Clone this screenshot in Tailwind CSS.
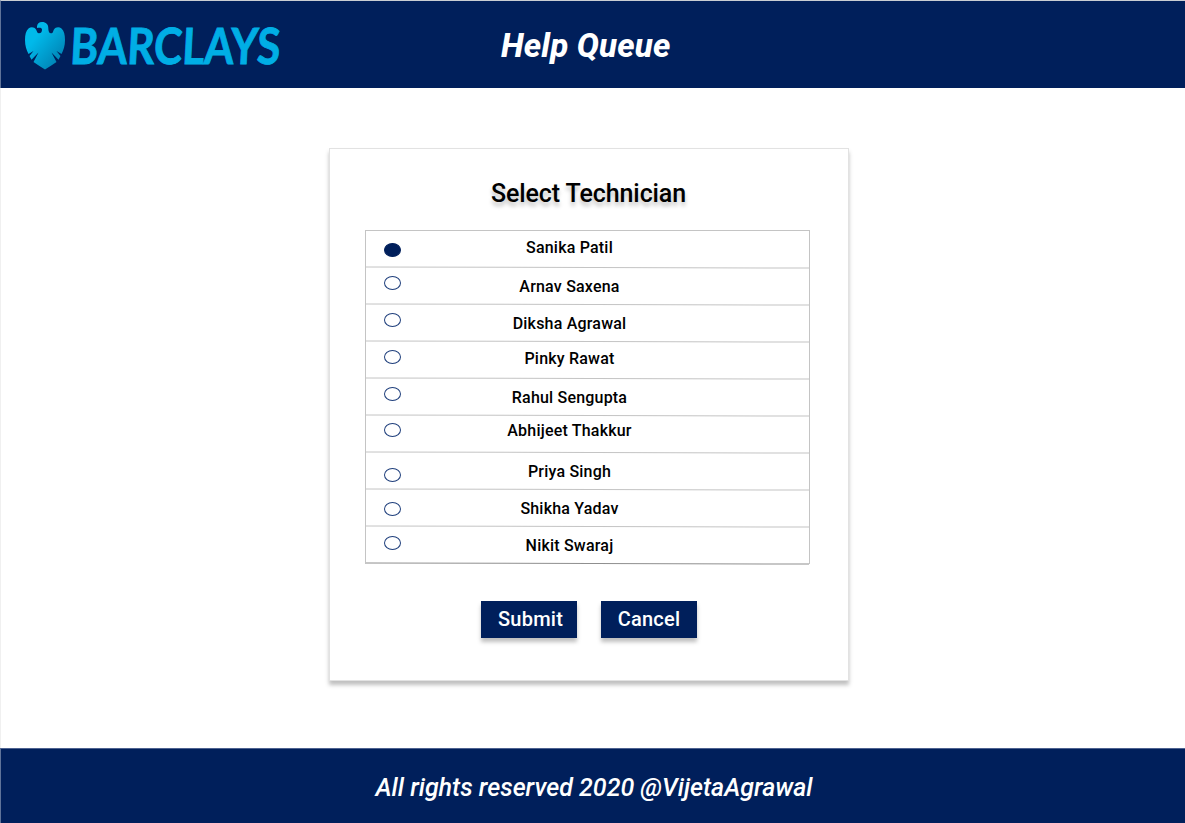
<!DOCTYPE html>
<html lang="en">
<head>
<meta charset="utf-8">
<title>Help Queue</title>
<script src="https://cdn.jsdelivr.net/npm/@tailwindcss/browser@4"></script>
</head>
<body class="flex h-[823px] w-[1185px] flex-col overflow-hidden bg-white font-[Roboto,sans-serif] text-black">
<header class="flex h-[88px] shrink-0 border-t border-l border-t-[#c9cdd3] border-l-[#5f7399] bg-[#001f5b]">
  <svg class="ml-[19px] h-[87px] w-[270px] shrink-0 overflow-visible" viewBox="20 1 270 87" role="img" aria-label="Barclays">
    <defs>
      <linearGradient id="eagle" x1="0" y1="0" x2="1" y2="1">
        <stop offset="0.3" stop-color="#00b9ea"/>
        <stop offset="0.9" stop-color="#007fb0"/>
      </linearGradient>
    </defs>
    <path fill="url(#eagle)" d="M37 26.500C37 24 39 22 42 22C46 22 48.300 24.500 48.300 28C48.300 31 49 33.300 51 33.300C53.300 33.300 53 31 54 29.500C55.500 27 59 26.500 61.500 28.500C64 30.700 65 34.500 65 40C65 46 63.500 50 61.500 54L56.500 51L60.500 56L58.500 59.800L51.500 52.500L56.500 62C53 64.500 49 67 45 69.500C41 67 37 64.500 33.500 62L38.500 52.500L31.500 59.800L29.500 56L33.500 51L28.500 54C26.500 50 25 46 25 40C25 34.500 26 30.700 28.500 28.500C31 26.500 34.500 27 36 29.500C37 31 37 33.300 39 33.300C41.300 33.300 42 31.500 42 29.500C42 27.500 39.500 27.300 37 28Z"/>
    <text transform="translate(69.500 63.800) skewX(-3)" textLength="210" lengthAdjust="spacingAndGlyphs" class="fill-[#00aee5] stroke-[#00aee5] stroke-[0.900px] font-[Lato,sans-serif] text-[50px] font-bold">BARCLAYS</text>
  </svg>
  <h1 class="ml-[211px] mt-[25px] h-10 whitespace-nowrap text-[33px] leading-10 font-extrabold tracking-[0.2px] italic text-white">Help Queue</h1>
</header>
<main class="flex flex-1 justify-center border-l border-[#f0f0f0] pt-[60px]">
  <section class="mr-[9px] flex h-[533px] w-[520px] flex-col items-center border border-[#e2e2e2] bg-white shadow-[0_4px_4px_rgba(0,0,0,0.25)]">
    <h2 class="mt-[29px] text-[25px] leading-8 font-medium tracking-[-0.1px] [text-shadow:0_4px_4px_rgba(0,0,0,0.25)]">Select Technician</h2>
    <ul class="mr-[3px] mt-[20px] w-[445px] border border-b-0 border-[#c4c4c4] text-base leading-5 font-medium tracking-[0.2px]">
      <li class="flex h-[37px] flex-col"><div class="flex h-9"><i class="ml-[18px] mt-[12px] h-[14px] w-[17px] rounded-[50%] border border-[#001f5b] bg-[#001f5b]"></i><span class="ml-[69px] mt-[7px] w-[200px] text-center">Sanika Patil</span></div><hr class="w-full rotate-[0.13deg] border-[#c4c4c4]"></li>
      <li class="flex h-[37px] flex-col"><div class="flex h-9"><i class="ml-[18px] mt-[8px] h-[14px] w-[17px] rounded-[50%] border border-[#1f3f7c]"></i><span class="ml-[69px] mt-[9px] w-[200px] text-center">Arnav Saxena</span></div><hr class="w-full rotate-[0.13deg] border-[#c4c4c4]"></li>
      <li class="flex h-[37px] flex-col"><div class="flex h-9"><i class="ml-[18px] mt-[8px] h-[14px] w-[17px] rounded-[50%] border border-[#1f3f7c]"></i><span class="ml-[69px] mt-[9px] w-[200px] text-center">Diksha Agrawal</span></div><hr class="w-full rotate-[0.13deg] border-[#c4c4c4]"></li>
      <li class="flex h-[37px] flex-col"><div class="flex h-9"><i class="ml-[18px] mt-[8px] h-[14px] w-[17px] rounded-[50%] border border-[#1f3f7c]"></i><span class="ml-[69px] mt-[7px] w-[200px] text-center">Pinky Rawat</span></div><hr class="w-full rotate-[0.13deg] border-[#c4c4c4]"></li>
      <li class="flex h-[37px] flex-col"><div class="flex h-9"><i class="ml-[18px] mt-[8px] h-[14px] w-[17px] rounded-[50%] border border-[#1f3f7c]"></i><span class="ml-[69px] mt-[9px] w-[200px] text-center">Rahul Sengupta</span></div><hr class="w-full rotate-[0.13deg] border-[#c4c4c4]"></li>
      <li class="flex h-[37px] flex-col"><div class="flex h-9"><i class="ml-[18px] mt-[7px] h-[14px] w-[17px] rounded-[50%] border border-[#1f3f7c]"></i><span class="ml-[69px] mt-[5px] w-[200px] text-center">Abhijeet Thakkur</span></div><hr class="w-full rotate-[0.13deg] border-[#c4c4c4]"></li>
      <li class="flex h-[37px] flex-col"><div class="flex h-9"><i class="ml-[18px] mt-[15px] h-[14px] w-[17px] rounded-[50%] border border-[#1f3f7c]"></i><span class="ml-[69px] mt-[9px] w-[200px] text-center">Priya Singh</span></div><hr class="w-full rotate-[0.13deg] border-[#c4c4c4]"></li>
      <li class="flex h-[37px] flex-col"><div class="flex h-9"><i class="ml-[18px] mt-[12px] h-[14px] w-[17px] rounded-[50%] border border-[#1f3f7c]"></i><span class="ml-[69px] mt-[9px] w-[200px] text-center">Shikha Yadav</span></div><hr class="w-full rotate-[0.13deg] border-[#c4c4c4]"></li>
      <li class="flex h-[37px] flex-col"><div class="flex h-9"><i class="ml-[18px] mt-[9px] h-[14px] w-[17px] rounded-[50%] border border-[#1f3f7c]"></i><span class="ml-[69px] mt-[9px] w-[200px] text-center">Nikit Swaraj</span></div><hr class="w-full rotate-[0.13deg] border-[#8f8f8f]"></li>
    </ul>
    <div class="mt-[37px] flex gap-6 text-xl font-medium tracking-[0.25px] text-white">
      <button class="h-[37px] w-24 bg-[#001f5b] pb-0.5 pl-[4px] shadow-[0_4px_4px_rgba(0,0,0,0.25)]">Submit</button>
      <button class="h-[37px] w-24 bg-[#001f5b] pb-0.5 pl-[1px] shadow-[0_4px_4px_rgba(0,0,0,0.25)]">Cancel</button>
    </div>
  </section>
</main>
<footer class="flex h-[75px] shrink-0 justify-center border-t border-l border-t-[#4d6290] border-l-[#5f7399] bg-[#001f5b] pt-[23px] pl-[2px] text-[25px] leading-8 font-medium italic text-white">All rights reserved 2020 @VijetaAgrawal</footer>
</body>
</html>
